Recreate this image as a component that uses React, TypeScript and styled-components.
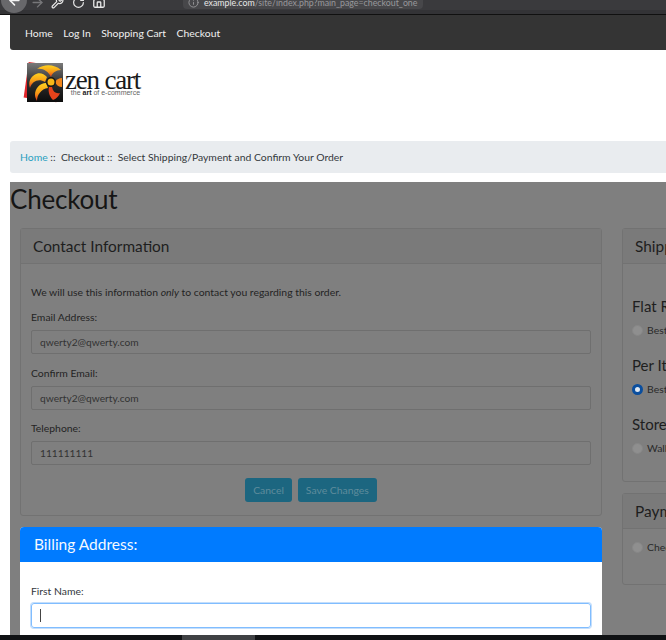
import styled, { createGlobalStyle } from 'styled-components';
import { ArrowLeft, ArrowRight, Home, Info, RotateCw, Wrench } from 'lucide-react';

const GlobalStyle = createGlobalStyle`
    html, body {
        margin: 0;
        padding: 0;
        background: #fff;
    }
    * {
        box-sizing: border-box;
    }
`;

const NAV_ITEMS = ['Home', 'Log In', 'Shopping Cart', 'Checkout'];

const CONTACT_FIELDS = [
    { label: 'Email Address:', value: 'qwerty2@qwerty.com' },
    { label: 'Confirm Email:', value: 'qwerty2@qwerty.com' },
    { label: 'Telephone:', value: '111111111' },
];

const SHIPPING_GROUPS = [
    { title: 'Flat Rate', option: 'Best Way', checked: false },
    { title: 'Per Item', option: 'Best Way', checked: true },
    { title: 'Store Pickup', option: 'Walk In', checked: false },
];

function ZenLogo() {
    return (
        <svg width="42" height="44" viewBox="0 0 42 44">
            <defs>
                <linearGradient id="blade" x1="0" y1="0" x2="0" y2="1">
                    <stop offset="0" stopColor="#ffd21f" />
                    <stop offset="0.55" stopColor="#f79a16" />
                    <stop offset="1" stopColor="#e2361c" />
                </linearGradient>
                <linearGradient id="plate" x1="0" y1="0" x2="0" y2="1">
                    <stop offset="0" stopColor="#7a7a7a" />
                    <stop offset="0.5" stopColor="#2e2e2e" />
                    <stop offset="1" stopColor="#0c0c0c" />
                </linearGradient>
            </defs>
            <rect x="4" y="4" width="33" height="36" fill="#e0262b" transform="rotate(8 20 22)" />
            <rect x="5" y="3" width="36" height="39" fill="url(#plate)" />
            <path d="M39 10C32 4 22 4 15 9c6-1 11 2 14 8 1-4 5-7 10-7z" fill="url(#blade)" />
            <path d="M25 17C20 11 12 12 8 20c-1 3-1 5 0 8 2-7 9-10 15-6z" fill="url(#blade)" />
            <path d="M24 23c-6 0-11 5-11 12 0 2 1 4 2 6 0-6 4-12 11-13z" fill="url(#blade)" />
            <path d="M27 27c-1 4 0 9 4 13 3-1 6-4 7-7-4 1-7-1-8-6z" fill="#e8431b" />
            <path d="M33 22c1 3 4 5 7 5v-9c-3 0-6 2-7 4z" fill="#f2861a" />
            <circle cx="29" cy="22" r="4.2" fill="#f7b718" stroke="#161616" strokeWidth="1.4" />
        </svg>
    );
}

export default function App() {
    return (
        <Page>
            <GlobalStyle />
            <BrowserBar>
                <BackButton>
                    <ArrowLeft size={15} color="#f2f2f2" strokeWidth={2.4} />
                </BackButton>
                <ToolIcon>
                    <ArrowRight size={15} color="#77777a" strokeWidth={2.2} />
                </ToolIcon>
                <ToolIcon>
                    <Wrench size={13} color="#e8e8e8" strokeWidth={2.2} />
                </ToolIcon>
                <ToolIcon>
                    <RotateCw size={13} color="#e8e8e8" strokeWidth={2.2} />
                </ToolIcon>
                <ToolIcon>
                    <Home size={14} color="#e8e8e8" strokeWidth={2.2} />
                </ToolIcon>
                <UrlPill>
                    <Info size={11} color="#98989a" />
                    <UrlText>
                        <UrlHost>example.com</UrlHost>
                        /site/index.php?main_page=checkout_one
                    </UrlText>
                </UrlPill>
            </BrowserBar>

            <Shell>
                <NavBar>
                    {NAV_ITEMS.map((item) => (
                        <NavItem key={item}>{item}</NavItem>
                    ))}
                </NavBar>

                <LogoRow>
                    <ZenLogo />
                    <LogoText>
                        <LogoName>zen cart</LogoName>
                        <LogoTag>
                            the <b>art</b> of e-commerce
                        </LogoTag>
                    </LogoText>
                </LogoRow>

                <Breadcrumb>
                    <CrumbLink>Home</CrumbLink>
                    <span>&nbsp;::&nbsp; Checkout ::&nbsp; Select Shipping/Payment and Confirm Your Order</span>
                </Breadcrumb>

                <Dimmed>
                    <PageTitle>Checkout</PageTitle>
                    <Columns>
                        <MainColumn>
                            <Card>
                                <CardHeader>Contact Information</CardHeader>
                                <CardBody>
                                    <Intro>
                                        We will use this information <em>only</em> to contact you regarding this order.
                                    </Intro>
                                    {CONTACT_FIELDS.map((field) => (
                                        <Field key={field.label}>
                                            <FieldLabel>{field.label}</FieldLabel>
                                            <DimInput>{field.value}</DimInput>
                                        </Field>
                                    ))}
                                    <Actions>
                                        <DimButton>Cancel</DimButton>
                                        <DimButton>Save Changes</DimButton>
                                    </Actions>
                                </CardBody>
                            </Card>

                            <BillingCard>
                                <BillingHeader>Billing Address:</BillingHeader>
                                <BillingBody>
                                    <BillingLabel>First Name:</BillingLabel>
                                    <FocusInput>
                                        <Caret />
                                    </FocusInput>
                                </BillingBody>
                            </BillingCard>
                        </MainColumn>

                        <SideColumn>
                            <ShippingCard>
                                <CardHeader>Shipping Method</CardHeader>
                                <SideBody>
                                    {SHIPPING_GROUPS.map((group) => (
                                        <div key={group.title}>
                                            <GroupTitle>{group.title}</GroupTitle>
                                            <OptionRow>
                                                <Radio $checked={group.checked} />
                                                <span>{group.option}</span>
                                            </OptionRow>
                                        </div>
                                    ))}
                                </SideBody>
                            </ShippingCard>
                            <PaymentCard>
                                <CardHeader>Payment Method</CardHeader>
                                <PaymentBody>
                                    <OptionRow>
                                        <Radio $checked={false} />
                                        <span>Check/Money Order</span>
                                    </OptionRow>
                                </PaymentBody>
                            </PaymentCard>
                        </SideColumn>
                    </Columns>
                </Dimmed>
            </Shell>

            <TaskBar>
                <TaskItem />
            </TaskBar>
        </Page>
    );
}

const Page = styled.div`
    display: flex;
    flex-direction: column;
    width: 666px;
    height: 640px;
    overflow: hidden;
    background: #fff;
    font-family: Lato, 'Noto Sans', sans-serif;
    font-size: 10.4px;
`;

const BrowserBar = styled.div`
    display: flex;
    align-items: flex-end;
    flex: none;
    height: 15px;
    padding: 0 0 5px;
    background: #3a3a3d;
    border-bottom: 1px solid #101010;
    box-shadow: inset 0 -4px 0 #333336;
`;

const BackButton = styled.span`
    display: flex;
    align-items: center;
    justify-content: center;
    width: 26px;
    height: 26px;
    margin: 0 0 -4px 1px;
    border-radius: 50%;
    background: #68686b;
    flex: none;
`;

const ToolIcon = styled.span`
    display: flex;
    align-items: center;
    justify-content: center;
    width: 20.5px;
    height: 16px;
    margin-bottom: -1px;
    flex: none;
`;

const UrlPill = styled.div`
    display: flex;
    align-items: flex-end;
    gap: 5px;
    width: 240px;
    height: 10px;
    margin-left: 74px;
    padding: 0 0 1px 5px;
    background: #47474a;
    border-radius: 0 0 4px 4px;
    white-space: nowrap;
`;

const UrlText = styled.span`
    color: #98989b;
    font-size: 8.8px;
    line-height: 10px;
`;

const UrlHost = styled.span`
    color: #e8e8e8;
`;

const Shell = styled.div`
    display: flex;
    flex-direction: column;
    flex: 1;
    min-height: 0;
    padding-left: 10px;
`;

const NavBar = styled.nav`
    display: flex;
    align-items: center;
    gap: 10.5px;
    flex: none;
    height: 35px;
    padding-left: 15px;
    background: #343434;
    border-radius: 0 0 0 3px;
`;

const NavItem = styled.span`
    color: #f0f0f0;
`;

const LogoRow = styled.div`
    display: flex;
    align-items: flex-start;
    flex: none;
    height: 91px;
    padding: 10px 0 0 12px;
`;

const LogoText = styled.div`
    display: flex;
    flex-direction: column;
    align-items: flex-end;
    margin: 10px 0 0 1px;
`;

const LogoName = styled.span`
    color: #1a1a1a;
    font-family: 'Liberation Serif', serif;
    font-size: 27px;
    line-height: 20px;
    letter-spacing: -1.2px;
`;

const LogoTag = styled.span`
    color: #666;
    font-family: 'Liberation Sans', sans-serif;
    font-size: 7px;
    line-height: 6px;

    b {
        color: #222;
    }
`;

const Breadcrumb = styled.div`
    display: flex;
    align-items: center;
    flex: none;
    height: 32px;
    margin-bottom: 9px;
    padding-left: 10px;
    background: #e9ecef;
    border-radius: 3px 0 0 3px;
    color: #34383c;
    white-space: nowrap;
`;

const CrumbLink = styled.span`
    color: #2a9fc0;
`;

const Dimmed = styled.div`
    flex: 1;
    min-height: 0;
    overflow: hidden;
    background: #7f7f7f;
`;

const PageTitle = styled.h1`
    height: 46px;
    margin: 0;
    color: #151515;
    font-size: 26px;
    font-weight: 400;
    letter-spacing: -0.2px;
    line-height: 34px;
`;

const Columns = styled.div`
    display: grid;
    grid-template-columns: 582px 220px;
    gap: 20px;
    padding-left: 10px;
`;

const MainColumn = styled.div`
    display: flex;
    flex-direction: column;
    gap: 11px;
`;

const SideColumn = styled.div`
    display: flex;
    flex-direction: column;
    gap: 11px;
`;

const Card = styled.section`
    border: 1px solid #727272;
    border-radius: 3px;
    background: #7f7f7f;
    color: #242424;
`;

const CardHeader = styled.h2`
    height: 35px;
    margin: 0;
    padding-left: 12px;
    background: #7a7a7a;
    border-bottom: 1px solid #727272;
    color: #1e1e1e;
    font-size: 15.4px;
    font-weight: 400;
    line-height: 34px;
    white-space: nowrap;
`;

const CardBody = styled.div`
    padding: 20px 10px 13px;
`;

const Intro = styled.p`
    height: 16px;
    margin: 0 0 9px;
    line-height: 16px;
`;

const Field = styled.div`
    margin-bottom: 10.5px;
`;

const FieldLabel = styled.div`
    height: 16px;
    margin-bottom: 5px;
    line-height: 16px;
`;

const DimInput = styled.div`
    height: 24px;
    padding-left: 8px;
    border: 1px solid #6f6f6f;
    border-radius: 2px;
    color: #333;
    font-size: 10.2px;
    line-height: 22px;
`;

const Actions = styled.div`
    display: flex;
    justify-content: center;
    gap: 6px;
    margin-top: 13px;
`;

const DimButton = styled.span`
    height: 24px;
    padding: 0 8px;
    background: #1c6680;
    border-radius: 3px;
    color: #5f8c9c;
    line-height: 24px;
`;

const BillingCard = styled.section`
    border-radius: 4px 4px 0 0;
    background: #fff;
    overflow: hidden;
`;

const BillingHeader = styled.h2`
    height: 35px;
    margin: 0;
    padding-left: 14px;
    background: #007bff;
    color: #f4f9ff;
    font-size: 15.5px;
    font-weight: 400;
    line-height: 35px;
`;

const BillingBody = styled.div`
    height: 80px;
    padding: 21px 11px 0;
`;

const BillingLabel = styled.div`
    height: 16px;
    margin-bottom: 4px;
    color: #33383d;
    line-height: 16px;
`;

const FocusInput = styled.div`
    display: flex;
    align-items: center;
    height: 25px;
    padding-left: 8px;
    border: 1px solid #80bdff;
    border-radius: 3px;
    box-shadow: 0 0 0 1px #c4defb;
`;

const Caret = styled.span`
    display: block;
    width: 1px;
    height: 13px;
    background: #444;
`;

const ShippingCard = styled(Card)`
    height: 254px;
`;

const PaymentCard = styled(Card)`
    height: 92px;
`;

const SideBody = styled.div`
    display: flex;
    flex-direction: column;
    gap: 17px;
    padding: 32px 9px 0;
`;

const PaymentBody = styled.div`
    padding: 10px 9px 0;
`;

const GroupTitle = styled.div`
    height: 20px;
    margin-bottom: 6px;
    color: #1e1e1e;
    font-size: 15px;
    line-height: 20px;
`;

const OptionRow = styled.div`
    display: flex;
    align-items: center;
    gap: 4px;
    height: 16px;
    color: #2a2a2a;
    white-space: nowrap;
`;

const Radio = styled.span<{ $checked: boolean }>`
    width: 11px;
    height: 11px;
    flex: none;
    border-radius: 50%;
    background: ${({ $checked }) => ($checked ? '#dfe8f2' : '#8f8f8f')};
    border: ${({ $checked }) => ($checked ? '3px solid #0a4e9e' : '1px solid #878787')};
`;

const TaskBar = styled.div`
    flex: none;
    height: 5px;
    padding-left: 182px;
    background: #101214;
`;

const TaskItem = styled.div`
    width: 73px;
    height: 5px;
    background: #3f4144;
`;
